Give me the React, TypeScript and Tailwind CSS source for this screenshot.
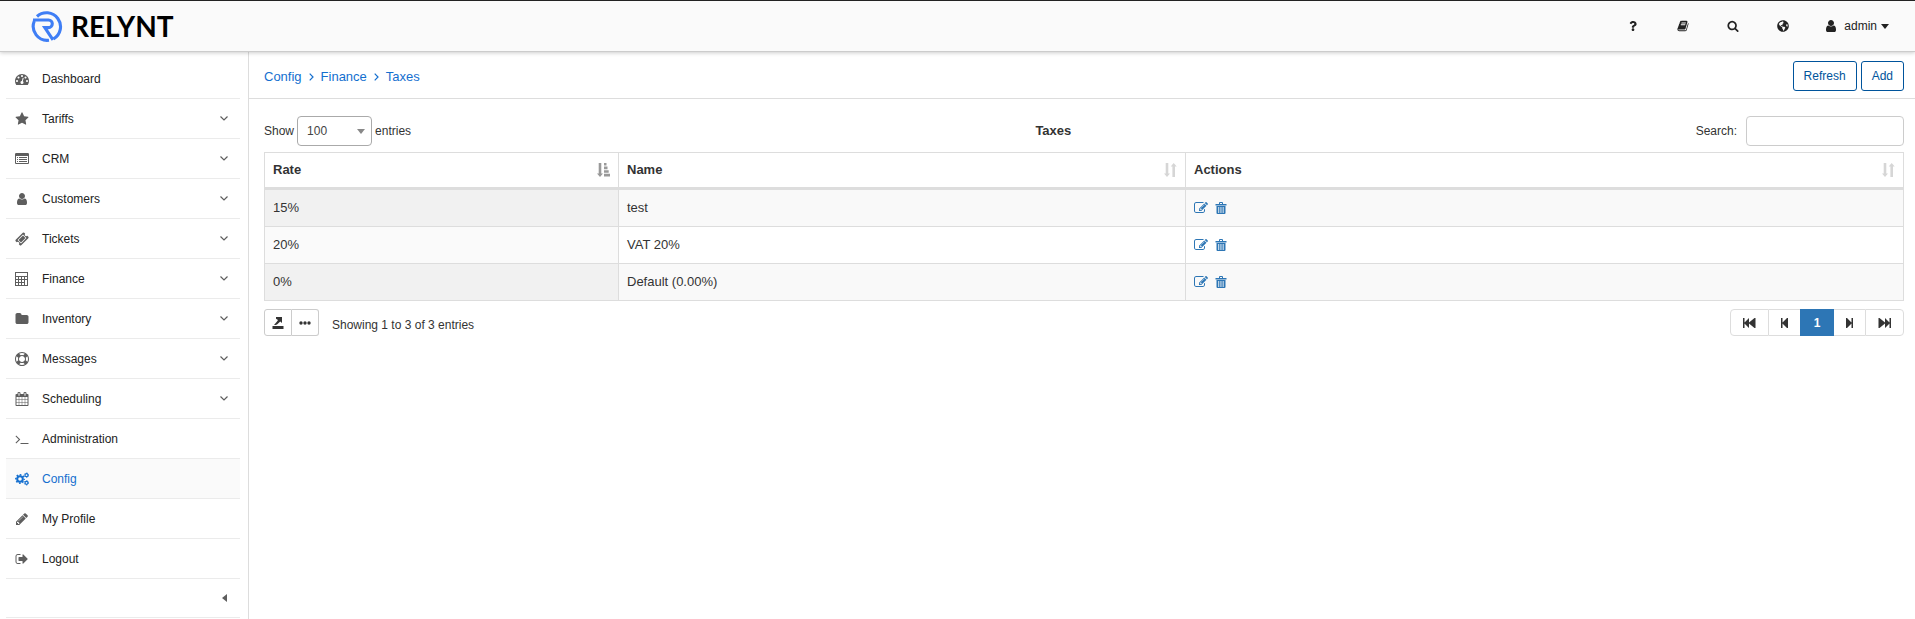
import React from "react";
import { FaGlobeAmericas, FaQuestion } from "react-icons/fa";

const listDot = "h-64q-13 0-22.5-9.5t-9.5-22.5v-64q0-13 9.5-22.5t22.5-9.5h64q13 0 22.5 9.5t9.5 22.5v64q0 13-9.5 22.5t-22.5 9.5z";
const listBar = "h-960q-13 0-22.5-9.5t-9.5-22.5v-64q0-13 9.5-22.5t22.5-9.5h960q13 0 22.5 9.5t9.5 22.5v64q0 13-9.5 22.5t-22.5 9.5z";

const paths = {
  dashboard:
    "M384 1152q0-53-37.5-90.5t-90.5-37.5-90.5 37.5-37.5 90.5 37.5 90.5 90.5 37.5 90.5-37.5 37.5-90.5zm192-448q0-53-37.5-90.5t-90.5-37.5-90.5 37.5-37.5 90.5 37.5 90.5 90.5 37.5 90.5-37.5 37.5-90.5zm428 481l101-382q6-26-7.5-48.5t-38.5-29.5-48 6.5-30 39.5l-101 382q-60 5-107 43.5t-63 98.5q-20 77 20 146t117 89 146-20 89-117q16-60-6-117t-72-91zm660-33q0-53-37.5-90.5t-90.5-37.5-90.5 37.5-37.5 90.5 37.5 90.5 90.5 37.5 90.5-37.5 37.5-90.5zm-640-640q0-53-37.5-90.5t-90.5-37.5-90.5 37.5-37.5 90.5 37.5 90.5 90.5 37.5 90.5-37.5 37.5-90.5zm448 192q0-53-37.5-90.5t-90.5-37.5-90.5 37.5-37.5 90.5 37.5 90.5 90.5 37.5 90.5-37.5 37.5-90.5zm320 448q0 261-141 483-19 29-54 29h-1402q-35 0-54-29-141-221-141-483 0-182 71-348t191-286 286-191 348-71 348 71 286 191 191 286 71 348z",
  star: "M1728 647q0 22-26 48l-363 354 86 500q1 7 1 20 0 21-10.5 35.5t-30.5 14.5q-19 0-40-12l-449-236-449 236q-22 12-40 12-21 0-31.5-14.5t-10.5-35.5q0-6 2-20l86-500-364-354q-25-27-25-48 0-37 56-46l502-73 225-455q19-41 49-41t49 41l225 455 502 73q56 9 56 46z",
  list:
    "M352 1280" + listDot + "M352 1024" + listDot + "M352 768" + listDot +
    "M1504 1280" + listBar + "M1504 1024" + listBar + "M1504 768" + listBar +
    "M1664 1376v-832q0-13-9.5-22.5t-22.5-9.5h-1472q-13 0-22.5 9.5t-9.5 22.5v832q0 13 9.5 22.5t22.5 9.5h1472q13 0 22.5-9.5t9.5-22.5zm128-1088v1088q0 66-47 113t-113 47h-1472q-66 0-113-47t-47-113v-1088q0-66 47-113t113-47h1472q66 0 113 47t47 113z",
  user: "M1536 1399q0 109-62.5 187t-150.5 78h-854q-88 0-150.5-78t-62.5-187q0-85 8.5-160.5t31.5-152 58.5-131 94-89 134.5-34.5q131 128 313 128t313-128q76 0 134.5 34.5t94 89 58.5 131 31.5 152 8.5 160.5zm-256-887q0 159-112.5 271.5t-271.5 112.5-271.5-112.5-112.5-271.5 112.5-271.5 271.5-112.5 271.5 112.5 112.5 271.5z",
  ticket:
    "M1024 452l316 316-572 572-316-316zm-211 979l618-618q19-19 19-45t-19-45l-362-362q-18-18-45-18t-45 18l-618 618q-19 19-19 45t19 45l362 362q18 18 45 18t45-18zm889-637l-907 908q-37 37-90.5 37t-90.5-37l-126-126q56-56 56-136t-56-136-136-56-136 56l-125-126q-37-37-37-90.5t37-90.5l907-906q37-37 90.5-37t90.5 37l125 125q-56 56-56 136t56 136 136 56 136-56l126 125q37 37 37 90.5t-37 90.5z",
  calculator:
    "M0 0h1664v1792h-1664zM128 128v384h1408v-384zM128 640v256h256v-256zM512 640v256h256v-256zM896 640v256h256v-256zM1280 640v256h256v-256zM128 1024v256h256v-256zM512 1024v256h256v-256zM896 1024v256h256v-256zM128 1408v256h256v-256zM512 1408v256h256v-256zM896 1408v256h256v-256zM1280 1024v640h256v-640z",
  folder:
    "M1728 608v704q0 92-66 158t-158 66h-1216q-92 0-158-66t-66-158v-960q0-92 66-158t158-66h320q92 0 158 66t66 158v32h672q92 0 158 66t66 158z",
  ring: "M896 0q182 0 348 71t286 191 191 286 71 348-71 348-191 286-286 191-348 71-348-71-286-191-191-286-71-348 71-348 191-286 286-191 348-71zm0 128q-190 0-361 90l194 194q82-28 167-28t167 28l194-194q-171-90-361-90zm-678 1129l194-194q-28-82-28-167t28-167l-194-194q-90 171-90 361t90 361zm678 407q190 0 361-90l-194-194q-82 28-167 28t-167-28l-194 194q171 90 361 90zm0-384q159 0 271.5-112.5t112.5-271.5-112.5-271.5-271.5-112.5-271.5 112.5-112.5 271.5 112.5 271.5 271.5 112.5zm484-217l194 194q90-171 90-361t-90-361l-194 194q28 82 28 167t-28 167z",
  calendar:
    "M192 1664h288v-288h-288v288zm352 0h320v-288h-320v288zm-352-352h288v-320h-288v320zm352 0h320v-320h-320v320zm-352-384h288v-288h-288v288zm736 736h320v-288h-320v288zm-384-736h320v-288h-320v288zm768 736h288v-288h-288v288zm-384-352h320v-320h-320v320zm-352-864v-288q0-13-9.5-22.5t-22.5-9.5h-64q-13 0-22.5 9.5t-9.5 22.5v288q0 13 9.5 22.5t22.5 9.5h64q13 0 22.5-9.5t9.5-22.5zm736 864h288v-320h-288v320zm-384-384h320v-288h-320v288zm384 0h288v-288h-288v288zm32-480v-288q0-13-9.5-22.5t-22.5-9.5h-64q-13 0-22.5 9.5t-9.5 22.5v288q0 13 9.5 22.5t22.5 9.5h64q13 0 22.5-9.5t9.5-22.5zm384-64v1280q0 52-38 90t-90 38h-1408q-52 0-90-38t-38-90v-1280q0-52 38-90t90-38h128v-96q0-66 47-113t113-47h64q66 0 113 47t47 113v96h384v-96q0-66 47-113t113-47h64q66 0 113 47t47 113v96h128q52 0 90 38t38 90z",
  terminal:
    "M649 983l-466 466q-10 10-23 10t-23-10l-50-50q-10-10-10-23t10-23l393-393-393-393q-10-10-10-23t10-23l50-50q10-10 23-10t23 10l466 466q10 10 10 23t-10 23zm1079 457v64q0 14-9 23t-23 9h-960q-14 0-23-9t-9-23v-64q0-14 9-23t23-9h960q14 0 23 9t9 23z",
  pencil:
    "M491 1536l91-91-235-235-91 91v107h128v128h107zm523-928q0-22-22-22-10 0-17 7l-542 542q-7 7-7 17 0 22 22 22 10 0 17-7l542-542q7-7 7-17zm-54-192l416 416-832 832h-416v-416zm683 96q0 53-37 90l-166 166-416-416 166-165q36-38 90-38 53 0 91 38l235 234q37 39 37 91z",
  signOut:
    "M704 1440q0 4 1 20t.5 26.5-3 23.5-10 19.5-20.5 6.5h-320q-119 0-203.5-84.5t-84.5-203.5v-704q0-119 84.5-203.5t203.5-84.5h320q13 0 22.5 9.5t9.5 22.5q0 4 1 20t.5 26.5-3 23.5-10 19.5-20.5 6.5h-320q-66 0-113 47t-47 113v704q0 66 47 113t113 47h312l11.5 1 11.5 3 8 5.5 7 9 2 13.5zm928-544q0 26-19 45l-544 544q-19 19-45 19t-45-19-19-45v-288h-448q-26 0-45-19t-19-45v-384q0-26 19-45t45-19h448v-288q0-26 19-45t45-19 45 19l544 544q19 19 19 45z",
  edit: "M888 1184l116-116-152-152-116 116v56h96v96h56zm440-720q-16-16-33 1l-350 350q-17 17-1 33t33-1l350-350q17-17 1-33zm80 594v190q0 119-84.5 203.5t-203.5 84.5h-832q-119 0-203.5-84.5t-84.5-203.5v-832q0-119 84.5-203.5t203.5-84.5h832q63 0 117 25 15 7 18 23 3 17-9 29l-49 49q-14 14-32 8-23-6-45-6h-832q-66 0-113 47t-47 113v832q0 66 47 113t113 47h832q66 0 113-47t47-113v-126q0-13 9-22l64-64q15-15 35-7t20 29zm-96-738l288 288-672 672h-288v-288zm444 132l-92 92-288-288 92-92q28-28 68-28t68 28l152 152q28 28 28 68t-28 68z",
  search:
    "M1216 832q0-185-131.5-316.5t-316.5-131.5-316.5 131.5-131.5 316.5 131.5 316.5 316.5 131.5 316.5-131.5 131.5-316.5zm512 832q0 52-38 90t-90 38q-54 0-90-38l-343-342q-179 124-399 124-143 0-273.5-55.5t-225-150-150-225-55.5-273.5 55.5-273.5 150-225 225-150 273.5-55.5 273.5 55.5 225 150 150 225 55.5 273.5q0 220-124 399l343 343q37 37 37 90z",
  book: "M1703 478q40 57 18 129l-275 906q-19 64-76.5 107.5t-122.5 43.5h-923q-77 0-148.5-53.5t-99.5-131.5q-24-67-2-127 0-4 3-27t4-37q1-8-3-21.5t-3-19.5q2-11 8-21t16.5-23.5 16.5-23.5q23-38 45-91.5t30-91.5q3-10 .5-30t-.5-28q3-11 17-28t17-23q21-36 42-92t25-90q1-9-2.5-32t.5-28q4-13 22-30.5t22-22.5q19-26 42.5-84.5t27.5-96.5q1-8-3-25.5t-2-26.5q2-8 9-18t18-23 17-21q8-12 16.5-30.5t15-35 16-36 19.5-32 26.5-23.5 36-11.5 47.5 5.5l-1 3q38-9 51-9h761q74 0 114 56t18 130l-274 906q-36 119-71.5 153.5t-128.5 34.5h-869q-27 0-38 15-11 16-1 43 24 70 144 70h923q29 0 56-15.5t35-41.5l300-987q7-22 5-57 38 15 59 43zm-1064 2q-4 13 2 22.5t20 9.5h608q13 0 25.5-9.5t16.5-22.5l21-64q4-13-2-22.5t-20-9.5h-608q-13 0-25.5 9.5t-16.5 22.5zm-83 256q-4 13 2 22.5t20 9.5h608q13 0 25.5-9.5t16.5-22.5l21-64q4-13-2-22.5t-20-9.5h-608q-13 0-25.5 9.5t-16.5 22.5z",
};

type IconName = keyof typeof paths;

function Icon({ name, className = "size-[14px]" }: { name: IconName; className?: string }) {
  return (
    <svg viewBox="0 0 1792 1792" className={className} fill="currentColor" fillRule={name === "calculator" ? "evenodd" : "nonzero"} aria-hidden="true">
      <path d={paths[name]} />
    </svg>
  );
}

function Gears() {
  return (
    <svg viewBox="0 0 14 14" className="size-[14px]" fill="none" stroke="currentColor" aria-hidden="true">
      <circle cx="5" cy="7" r="2.8" strokeWidth="2" />
      <circle cx="5" cy="7" r="4.200" strokeWidth="1.500" strokeDasharray="1.650 1.650" strokeDashoffset=".82" />
      <circle cx="11.500" cy="3.200" r="1.500" strokeWidth="1.200" />
      <circle cx="11.500" cy="3.200" r="2.300" strokeWidth=".8" strokeDasharray="1.200 1.200" />
      <circle cx="11.500" cy="10.800" r="1.500" strokeWidth="1.200" />
      <circle cx="11.500" cy="10.800" r="2.300" strokeWidth=".8" strokeDasharray="1.200 1.200" />
    </svg>
  );
}

const menu: { label: string; icon: IconName | "cogs"; sub?: boolean; active?: boolean }[] = [
  { label: "Dashboard", icon: "dashboard" },
  { label: "Tariffs", icon: "star", sub: true },
  { label: "CRM", icon: "list", sub: true },
  { label: "Customers", icon: "user", sub: true },
  { label: "Tickets", icon: "ticket", sub: true },
  { label: "Finance", icon: "calculator", sub: true },
  { label: "Inventory", icon: "folder", sub: true },
  { label: "Messages", icon: "ring", sub: true },
  { label: "Scheduling", icon: "calendar", sub: true },
  { label: "Administration", icon: "terminal" },
  { label: "Config", icon: "cogs", active: true },
  { label: "My Profile", icon: "pencil" },
  { label: "Logout", icon: "signOut" },
];

const taxes = [
  { rate: "15%", name: "test" },
  { rate: "20%", name: "VAT 20%" },
  { rate: "0%", name: "Default (0.00%)" },
];

function Logo() {
  return (
    <a href="#" className="flex items-center gap-2 text-black" aria-label="Relynt home">
      <svg viewBox="0 0 32 32" className="size-8" fill="none" stroke="#3f7ef5" strokeWidth="3.100" aria-hidden="true">
        <path d="M6 6.500A14 14 0 1 1 22.500 28.900" />
        <path d="M2 10H17.500a3.700 3.700 0 0 1 0 7.600H13.800L22 29.800" />
        <path d="M3.300 11A14 14 0 0 0 18 30.200" />
      </svg>
      <span className="font-[Lato,sans-serif] text-[28px] leading-8 font-bold">RELYNT</span>
    </a>
  );
}

function Header() {
  return (
    <header className="z-10 flex h-[52px] items-center justify-between border-t border-b border-t-[#222] border-b-[#ccc] bg-[#fafafa] pr-[26px] pl-[31px] shadow-[0_1px_4px_rgba(0,0,0,0.2)]">
      <Logo />
      <nav className="flex items-center text-[#222]" aria-label="Tools">
        <button type="button" aria-label="Help" className="flex w-[50px] justify-center"><FaQuestion className="size-[10px]" /></button>
        <button type="button" aria-label="Documentation" className="flex w-[50px] justify-center"><Icon name="book" className="size-3" /></button>
        <button type="button" aria-label="Search" className="flex w-[50px] justify-center"><Icon name="search" className="size-3" /></button>
        <button type="button" aria-label="Language" className="flex w-[50px] justify-center"><FaGlobeAmericas className="size-3" /></button>
        <button type="button" className="ml-4 flex items-center">
          <Icon name="user" />
          <span className="mr-1 ml-1.5">admin</span>
          <svg viewBox="0 0 8 5" className="h-[5px] w-2" fill="currentColor" aria-hidden="true"><path d="M0 0h8L4 5z" /></svg>
        </button>
      </nav>
    </header>
  );
}

function Sidebar() {
  return (
    <aside className="w-[249px] shrink-0 border-r border-[#ddd] pt-[7px] pr-2 pl-1.5">
      <ul>
        {menu.map((item) => (
          <li key={item.label} className="border-b border-[#ebebeb]">
            <a href="#" className={item.active ? "flex h-[39px] items-center bg-[#fafafa] pl-[9px] text-[#146fcf]" : "flex h-[39px] items-center pl-[9px] text-[#222]"}>
              <span className={item.active ? "mr-[13px]" : "mr-[13px] text-[#5e5e5e]"}>
                {item.icon === "cogs" ? <Gears /> : <Icon name={item.icon} />}
              </span>
              {item.label}
              {item.sub && (
                <svg viewBox="0 0 8 5" className="mr-3 ml-auto h-[5px] w-2" fill="none" stroke="#5e5e5e" strokeWidth="1.2" aria-hidden="true">
                  <path d="M.5.5L4 4L7.500.5" />
                </svg>
              )}
            </a>
          </li>
        ))}
      </ul>
      <button type="button" aria-label="Collapse menu" className="flex h-[39px] w-full items-center justify-end border-b border-[#ebebeb] pr-[13px] text-[#5e5e5e]">
        <svg viewBox="0 0 5 8" className="h-2 w-[5px]" fill="currentColor" aria-hidden="true"><path d="M5 0v8L0 4z" /></svg>
      </button>
    </aside>
  );
}

function Crumb() {
  return (
    <svg viewBox="0 0 5 8" className="h-2 w-[5px]" fill="none" stroke="currentColor" strokeWidth="1.2" aria-hidden="true">
      <path d="M.7.7L4 4L.7 7.300" />
    </svg>
  );
}

function SortIcon({ active }: { active?: boolean }) {
  return active ? (
    <svg viewBox="0 0 13 14" className="h-[14px] w-[13px]" fill="#999" aria-hidden="true">
      <path d="M1.700 0h2.600v10.500H6L3 14L0 10.500h1.700zM7 0h2.500v2.600H7zM7 3.600h3.500v2.600H7zM7 7.200h4.700v2.600H7zM7 10.800h6v2.600H7z" />
    </svg>
  ) : (
    <svg viewBox="0 0 13 14" className="h-[14px] w-[13px]" fill="#d6d6d6" aria-hidden="true">
      <path d="M1.700 0h2.600v10.500H6L3 14L0 10.500h1.700zM8.400 14h2.600V3.500h1.700L9.700 0L6.700 3.500h1.700z" />
    </svg>
  );
}

function Trash() {
  return (
    <svg viewBox="0 0 12 13" className="h-[13px] w-3" aria-hidden="true">
      <path fill="currentColor" fillRule="evenodd" d="M4 2V1q0-1 1-1h2q1 0 1 1v1h3.500v1.500H.5V2zM5 1v1h2V1zM1.500 4h9v7q0 1-1 1h-7q-1 0-1-1zM3.300 5v6h.9V5zM5.500 5v6h.9V5zM7.700 5v6h.9V5z" />
    </svg>
  );
}

const pagerIcons = {
  First: "M0 0h1.500v4.500L6 0v4.500L11.500 0h1v10h-1L6 5.500V10L1.500 5.500V10H0z",
  Previous: "M3 0h1.500v4.500L9 0h1v10H9L4.500 5.500V10H3z",
  Next: "M10 0H8.500v4.500L4 0H3v10h1l4.500-4.500V10H10z",
  Last: "M13 0h-1.500v4.500L7 0v4.500L1.500 0h-1v10h1L7 5.500V10l4.500-4.500V10H13z",
};

function PagerButton({ kind, className }: { kind: keyof typeof pagerIcons; className: string }) {
  return (
    <button type="button" aria-label={kind + " page"} className={className}>
      <svg viewBox="0 0 13 10" className="h-[10px] w-[13px]" fill="#333" aria-hidden="true"><path d={pagerIcons[kind]} /></svg>
    </button>
  );
}

function TaxTable() {
  return (
    <table className="w-full table-fixed border-separate border-spacing-0 border-t border-l border-[#ddd] text-left text-[13px] leading-5">
      <thead>
        <tr>
          <th className="w-[354px] border-r border-b-3 border-[#ddd] px-2 py-[7px]">
            <div className="flex items-center justify-between">Rate<SortIcon active /></div>
          </th>
          <th className="w-[567px] border-r border-b-3 border-[#ddd] px-2 py-[7px]">
            <div className="flex items-center justify-between">Name<SortIcon /></div>
          </th>
          <th className="border-r border-b-3 border-[#ddd] px-2 py-[7px]">
            <div className="flex items-center justify-between">Actions<SortIcon /></div>
          </th>
        </tr>
      </thead>
      <tbody>
        {taxes.map((tax) => (
          <tr key={tax.rate} className="group odd:bg-[#f9f9f9]">
            <td className="border-r border-b border-[#ddd] bg-[#fafafa] px-2 py-2 group-odd:bg-[#f1f1f1]">{tax.rate}</td>
            <td className="border-r border-b border-[#ddd] px-2 py-2">{tax.name}</td>
            <td className="border-r border-b border-[#ddd] px-2 py-2">
              <div className="flex items-center gap-[7px] text-[#2d76b5]">
                <button type="button" aria-label={"Edit " + tax.name}><Icon name="edit" /></button>
                <button type="button" aria-label={"Delete " + tax.name}><Trash /></button>
              </div>
            </td>
          </tr>
        ))}
      </tbody>
    </table>
  );
}

export default function App() {
  return (
    <div className="flex min-h-screen flex-col bg-white font-['Liberation_Sans',Arial,sans-serif] text-xs text-[#333]">
      <Header />
      <div className="flex flex-1">
        <Sidebar />
        <main className="min-w-0 flex-1">
          <div className="flex h-[47px] items-center justify-between border-b border-[#ddd] pt-0.5 pr-[11px] pl-[15px]">
            <nav aria-label="Breadcrumb" className="flex items-center gap-[7px] pt-0.5 text-[13px] text-[#146fcf]">
              <a href="#">Config</a>
              <Crumb />
              <a href="#">Finance</a>
              <Crumb />
              <a href="#">Taxes</a>
            </nav>
            <div className="flex gap-1">
              <button type="button" className="h-[30px] rounded-[3px] border border-[#00549c] px-2.5 text-[#00549c]">Refresh</button>
              <button type="button" className="h-[30px] rounded-[3px] border border-[#00549c] px-2.5 text-[#00549c]">Add</button>
            </div>
          </div>
          <div className="pt-[17px] pr-[11px] pl-[15px]">
            <div className="mb-1.5 flex h-[30px] items-center justify-between">
              <label className="flex items-center gap-[3px]">
                <span>Show</span>
                <span className="relative">
                  <select defaultValue="100" className="block h-[30px] w-[75px] appearance-none rounded-[4px] border border-[#aaa] bg-white pl-[9px] text-[#444]">
                    <option>10</option>
                    <option>25</option>
                    <option>50</option>
                    <option>100</option>
                  </select>
                  <svg viewBox="0 0 8 5" className="pointer-events-none absolute top-[13px] right-[7px] h-[5px] w-2" fill="#888" aria-hidden="true"><path d="M0 0h8L4 5z" /></svg>
                </span>
                <span>entries</span>
              </label>
              <h1 className="text-[13px] font-bold">Taxes</h1>
              <label className="flex items-center gap-[9px]">
                Search:
                <input type="search" className="h-[30px] w-[158px] rounded-[4px] border border-[#ccc] bg-white px-2" />
              </label>
            </div>
            <TaxTable />
            <div className="flex items-start justify-between pt-2">
              <div className="flex items-center">
                <button type="button" aria-label="Export" className="flex h-[27px] w-7 items-center justify-center rounded-l-[3px] border border-[#ccc]">
                  <svg viewBox="0 0 12 12" className="size-3" fill="#333" aria-hidden="true"><path d="M4 0h6v6L8.300 4.500L5 7.500L3.500 8H2L4.800 4.800L6 3L4 1.700zM.5 9h11v3H.5z" /></svg>
                </button>
                <button type="button" aria-label="More" className="flex h-[27px] w-[27px] items-center justify-center rounded-r-[3px] border border-l-0 border-[#ccc]">
                  <svg viewBox="0 0 12 4" className="h-1 w-3" fill="#333" aria-hidden="true"><circle cx="2" cy="2" r="1.700" /><circle cx="6" cy="2" r="1.700" /><circle cx="10" cy="2" r="1.700" /></svg>
                </button>
                <p className="pt-1 pl-[13px]">Showing 1 to 3 of 3 entries</p>
              </div>
              <nav aria-label="Pagination" className="flex h-[27px]">
                <PagerButton kind="First" className="flex w-[39px] items-center justify-center rounded-l-[4px] border border-[#ddd]" />
                <PagerButton kind="Previous" className="flex w-[31px] items-center justify-center border-y border-[#ddd]" />
                <button type="button" aria-current="page" className="w-[34px] bg-[#2d76b5] font-bold text-white">1</button>
                <PagerButton kind="Next" className="flex w-[31px] items-center justify-center border-y border-[#ddd]" />
                <PagerButton kind="Last" className="flex w-[39px] items-center justify-center rounded-r-[4px] border border-[#ddd]" />
              </nav>
            </div>
          </div>
        </main>
      </div>
    </div>
  );
}
